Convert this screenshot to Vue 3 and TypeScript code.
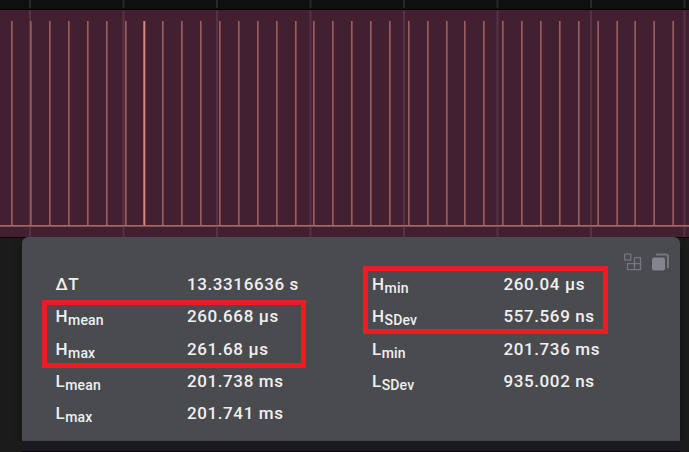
<script setup lang="ts">
interface Measurement {
  symbol: string
  sub: string
  value: string
}

const left: Measurement[] = [
  { symbol: 'ΔT', sub: '', value: '13.3316636 s' },
  { symbol: 'H', sub: 'mean', value: '260.668 µs' },
  { symbol: 'H', sub: 'max', value: '261.68 µs' },
  { symbol: 'L', sub: 'mean', value: '201.738 ms' },
  { symbol: 'L', sub: 'max', value: '201.741 ms' },
]
const right: Measurement[] = [
  { symbol: 'H', sub: 'min', value: '260.04 µs' },
  { symbol: 'H', sub: 'SDev', value: '557.569 ns' },
  { symbol: 'L', sub: 'min', value: '201.736 ms' },
  { symbol: 'L', sub: 'SDev', value: '935.002 ns' },
]
const columns = [left, right]

const gridLines = [29, 122.5, 216, 309.5, 403, 496.5, 590, 683.5]
const pulses = [
  11, 30, 49, 68, 87, 106, 125, 143, 162, 181, 200, 219, 238, 257, 276, 295, 313, 332,
  351, 370, 389, 408, 427, 446, 464, 483, 502, 521, 540, 559, 578, 597, 616, 634, 653, 672,
]

// The two pixel columns of a pulse trade brightness as its phase drifts.
function leading(x: number): string {
  if (x === 143) return '#a86661'
  return x >= 597 ? '#7c464c' : '#9a5d5d'
}
function trailing(x: number): string {
  if (x === 143) return '#d58b80'
  return x >= 597 ? '#9a5d5d' : '#7c464c'
}
</script>

<template>
  <main class="screen">
    <svg class="plot" width="689" height="238" viewBox="0 0 689 238">
      <rect width="689" height="9" fill="#0f0f0f" />
      <rect y="9" width="689" height="1" fill="#000" />
      <rect y="10" width="689" height="227" fill="#42202f" />
      <rect y="237" width="689" height="1" fill="#050305" />
      <g v-for="x in gridLines" :key="x">
        <rect :x="x" y="0" width="2" height="8" fill="#29292b" />
        <rect :x="x" y="10" width="2" height="227" fill="#563242" />
      </g>
      <g v-for="x in pulses" :key="x">
        <rect :x="x" y="21" width="1" height="205" :fill="leading(x)" />
        <rect :x="x + 1" y="21" width="1" height="205" :fill="trailing(x)" />
        <rect v-if="x === 143" :x="x + 2" y="21" width="1" height="205" fill="#714047" />
      </g>
      <rect y="225" width="689" height="1" fill="#a66567" />
      <rect y="226" width="689" height="1" fill="#875055" />
    </svg>

    <section class="panel">
      <div class="tools">
        <svg width="18" height="18" viewBox="0 0 18 18" fill="none" stroke="#747680" stroke-width="1.25">
          <path d="M.7 1h6v6h-6zM10.5 4.5h6v12h-13v-6h13M10.5 4.5v12" />
        </svg>
        <svg width="18" height="18" viewBox="0 0 18 18">
          <rect x="0" y="4.5" width="13" height="13" rx="2" fill="#838590" />
          <path d="M4 1.5h10a2 2 0 0 1 2 2v11.5" fill="none" stroke="#747680" stroke-width="2" />
        </svg>
      </div>
      <div class="columns">
        <dl v-for="(column, index) in columns" :key="index" class="column">
          <div v-for="item in column" :key="item.symbol + item.sub" class="row">
            <dt>{{ item.symbol }}<span v-if="item.sub" class="sub">{{ item.sub }}</span></dt>
            <dd>{{ item.value }}</dd>
          </div>
        </dl>
      </div>
    </section>
    <div class="footer"></div>
    <div class="mark mark-left"></div>
    <div class="mark mark-right"></div>
  </main>
</template>

<style>
body {
  margin: 0;
  background: #1b1b1b;
}
</style>

<style scoped>
.screen {
  position: relative;
  width: 689px;
  height: 452px;
  overflow: hidden;
  background: #1b1b1b;
  font-family: Roboto, "Liberation Sans", sans-serif;
}
.plot {
  display: block;
}
.panel {
  position: relative;
  box-sizing: border-box;
  width: 658px;
  height: 204px;
  margin: -1px 0 0 22px;
  padding: 31px 0 0 33.5px;
  border: solid #424348;
  border-width: 0 0 1px;
  border-radius: 6px 6px 0 0;
  background: #4a4b4f;
  box-shadow: 0 3px 8px rgba(0, 0, 0, 0.35);
  clip-path: inset(0 -9px 0 -9px);
}
.tools {
  position: absolute;
  top: 16px;
  right: 10px;
  display: flex;
  gap: 10px;
}
.tools svg {
  display: block;
}
.columns {
  display: grid;
  grid-template-columns: 316.5px 1fr;
}
.column {
  margin: 0;
}
.row {
  display: grid;
  grid-template-columns: 131.5px 1fr;
  height: 32.25px;
  line-height: 32px;
  font-size: 17px;
  font-weight: 500;
  letter-spacing: 0.6px;
  color: #f0f0f1;
  white-space: nowrap;
}
dt {
  letter-spacing: 0.5px;
}
dd {
  margin: 0;
}
.sub {
  position: relative;
  top: 3px;
  font-size: 14px;
  font-weight: 500;
  letter-spacing: 0.15px;
}
.footer {
  box-sizing: border-box;
  width: 658px;
  height: 11px;
  margin-left: 22px;
  border-bottom: 1px solid #09060b;
  background: #1b1a1f;
}
.mark {
  position: absolute;
  box-sizing: border-box;
  height: 68px;
  border: 5px solid #ed1c24;
}
.mark-left {
  left: 42px;
  top: 300px;
  width: 264px;
}
.mark-right {
  left: 363px;
  top: 266px;
  width: 245px;
}
</style>
